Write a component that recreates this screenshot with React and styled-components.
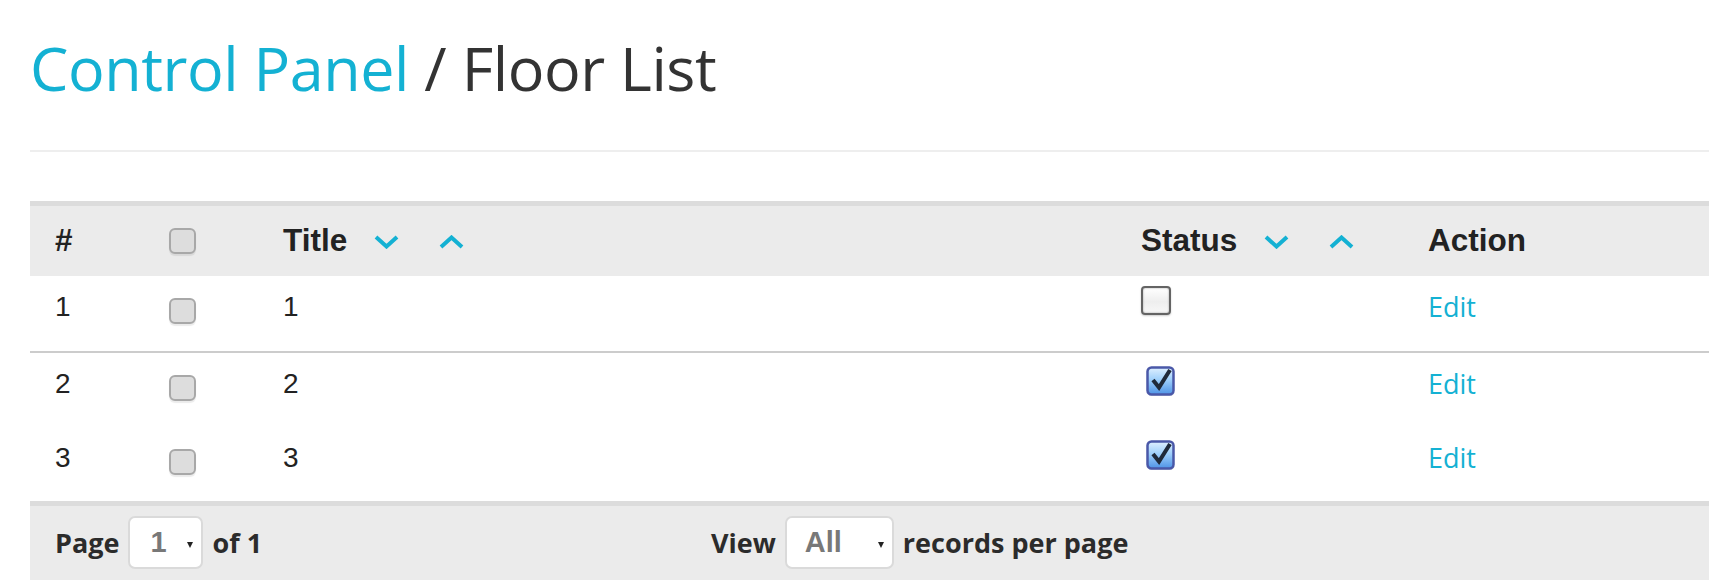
import React from "react";
import styled, { createGlobalStyle } from "styled-components";

const GlobalStyle = createGlobalStyle`
  html, body {
    margin: 0;
    padding: 0;
    background: #fff;
    overflow: hidden;
  }
  body {
    font-family: "Liberation Sans", Arial, sans-serif;
    color: #222;
  }
`;

const COLS = "114px 114px 858px 287px 1fr";

const floors = [
  { id: 1, title: "1", active: false },
  { id: 2, title: "2", active: true },
  { id: 3, title: "3", active: true },
];

const Chevron = ({ up }) => (
  <svg width="25" height="14" viewBox="0 0 25 14">
    <polyline
      points={up ? "2,12 12.5,2.5 23,12" : "2,2 12.5,11.5 23,2"}
      fill="none"
      stroke="#14b1d3"
      strokeWidth="4"
    />
  </svg>
);

const CheckedBox = () => (
  <svg width="30" height="32" viewBox="0 0 30 32">
    <defs>
      <linearGradient id="cbFill" x1="0" y1="0" x2="0" y2="1">
        <stop offset="0" stopColor="#dff0ff" />
        <stop offset="0.45" stopColor="#9fd0fb" />
        <stop offset="1" stopColor="#4e93e6" />
      </linearGradient>
    </defs>
    <rect x="2" y="3" width="26" height="27" rx="4" fill="#d5d5d5" opacity="0.6" />
    <rect x="1.5" y="1.5" width="26" height="27" rx="4" fill="url(#cbFill)" stroke="#4a58a8" strokeWidth="2.5" />
    <polyline points="7,14 13,21.5 24,4" fill="none" stroke="#1f2a3a" strokeWidth="4" strokeLinejoin="miter" />
  </svg>
);

const Page = styled.div`
  padding-left: 30px;
  width: 1760px;
`;

const Heading = styled.h1`
  margin: 0;
  padding-top: 28px;
  font-family: "Open Sans", sans-serif;
  font-weight: 400;
  font-size: 61px;
  line-height: 80px;
  color: #333;
  letter-spacing: -0.45px;
`;

const Crumb = styled.span`
  color: #14b1d3;
`;

const Rule = styled.div`
  height: 2px;
  background: #eeeeee;
  margin-top: 42px;
`;

const Table = styled.div`
  margin-top: 49px;
`;

const HeadRow = styled.div`
  display: grid;
  grid-template-columns: ${COLS};
  align-items: center;
  height: 70px;
  padding-left: 25px;
  background: #ebebeb;
  border-top: 5px solid #dcdcdc;
  font-size: 31.5px;
  font-weight: 700;
  color: #222;
`;

const HeadCell = styled.div`
  display: flex;
  align-items: center;
  margin-top: -1px;
`;

const SortIcon = styled.span`
  display: inline-flex;
  margin-left: ${(p) => p.$gap}px;
  margin-top: 2px;
`;

const Row = styled.div`
  display: grid;
  grid-template-columns: ${COLS};
  align-items: start;
  height: ${(p) => (p.$divider ? 77 : 74)}px;
  box-sizing: border-box;
  padding: 15px 0 0 25px;
  border-bottom: ${(p) => (p.$divider ? "2px solid #cccccc" : "none")};
  font-size: 28px;
  line-height: 32px;
  color: #222;
`;

const Cell = styled.div`
  min-height: 32px;
`;

const GreyBox = styled.span`
  display: inline-block;
  box-sizing: border-box;
  width: 27px;
  height: 26px;
  margin-top: ${(p) => p.$top || 0}px;
  border: 2.5px solid #a8a8a8;
  border-radius: 6px;
  background: #dddddd;
  box-shadow: 0 2px 1px rgba(0, 0, 0, 0.08);
  vertical-align: middle;
`;

const PlainBox = styled.span`
  display: block;
  box-sizing: border-box;
  width: 30px;
  height: 29px;
  margin-top: -5px;
  border: 2.5px solid #646464;
  border-radius: 4px;
  background: linear-gradient(#ffffff, #eeeeee 55%, #f7f7f7);
  box-shadow: inset 0 0 2px #999, 0 1px 2px rgba(0, 0, 0, 0.2);
`;

const StatusSlot = styled.div`
  margin-top: ${(p) => (p.$on ? -2 : 0)}px;
  margin-left: ${(p) => (p.$on ? 5 : 0)}px;
  line-height: 0;
`;

const EditLink = styled.a`
  font-family: "Open Sans", sans-serif;
  font-size: 27px;
  color: #14b1d3;
  text-decoration: none;
  line-height: 34px;
  margin-top: -1px;
  display: inline-block;
`;

const Footer = styled.div`
  display: grid;
  grid-template-columns: 656px auto;
  align-items: center;
  height: 72px;
  padding: 0 0 2px 25px;
  background: #ebebeb;
  border-top: 5px solid #dcdcdc;
  font-family: "Open Sans", sans-serif;
  font-weight: 700;
  font-size: 27px;
  color: #2b2b2b;
`;

const Group = styled.div`
  display: flex;
  align-items: center;
  gap: 9px;
`;

const Select = styled.div`
  position: relative;
  box-sizing: border-box;
  width: ${(p) => p.$w}px;
  height: 53px;
  padding-left: ${(p) => p.$pad}px;
  display: flex;
  align-items: center;
  background: #fff;
  border: 2px solid #dadada;
  border-radius: 7px;
  font-family: "Liberation Sans", Arial, sans-serif;
  font-size: 29px;
  font-weight: 700;
  color: #787878;
  &::after {
    content: "";
    position: absolute;
    right: 8px;
    top: 24px;
    border-left: 3.5px solid transparent;
    border-right: 3.5px solid transparent;
    border-top: 6px solid #222;
  }
`;

export default function App() {
  return (
    <>
      <GlobalStyle />
      <Page>
        <Heading>
          <Crumb>Control Panel</Crumb> / Floor List
        </Heading>
        <Rule />
        <Table>
          <HeadRow>
            <HeadCell>#</HeadCell>
            <HeadCell>
              <GreyBox />
            </HeadCell>
            <HeadCell>
              Title
              <SortIcon $gap={27}>
                <Chevron />
              </SortIcon>
              <SortIcon $gap={40}>
                <Chevron up />
              </SortIcon>
            </HeadCell>
            <HeadCell>
              Status
              <SortIcon $gap={27}>
                <Chevron />
              </SortIcon>
              <SortIcon $gap={40}>
                <Chevron up />
              </SortIcon>
            </HeadCell>
            <HeadCell>Action</HeadCell>
          </HeadRow>
          {floors.map((f, i) => (
            <Row key={f.id} $divider={i === 0}>
              <Cell>{f.id}</Cell>
              <Cell>
                <GreyBox $top={5} />
              </Cell>
              <Cell>{f.title}</Cell>
              <StatusSlot $on={f.active}>
                {f.active ? <CheckedBox /> : <PlainBox />}
              </StatusSlot>
              <Cell>
                <EditLink href="#">Edit</EditLink>
              </Cell>
            </Row>
          ))}
          <Footer>
            <Group>
              Page
              <Select $w={75} $pad={20}>1</Select>
              of 1
            </Group>
            <Group>
              View
              <Select $w={109} $pad={18}>All</Select>
              records per page
            </Group>
          </Footer>
        </Table>
      </Page>
    </>
  );
}
